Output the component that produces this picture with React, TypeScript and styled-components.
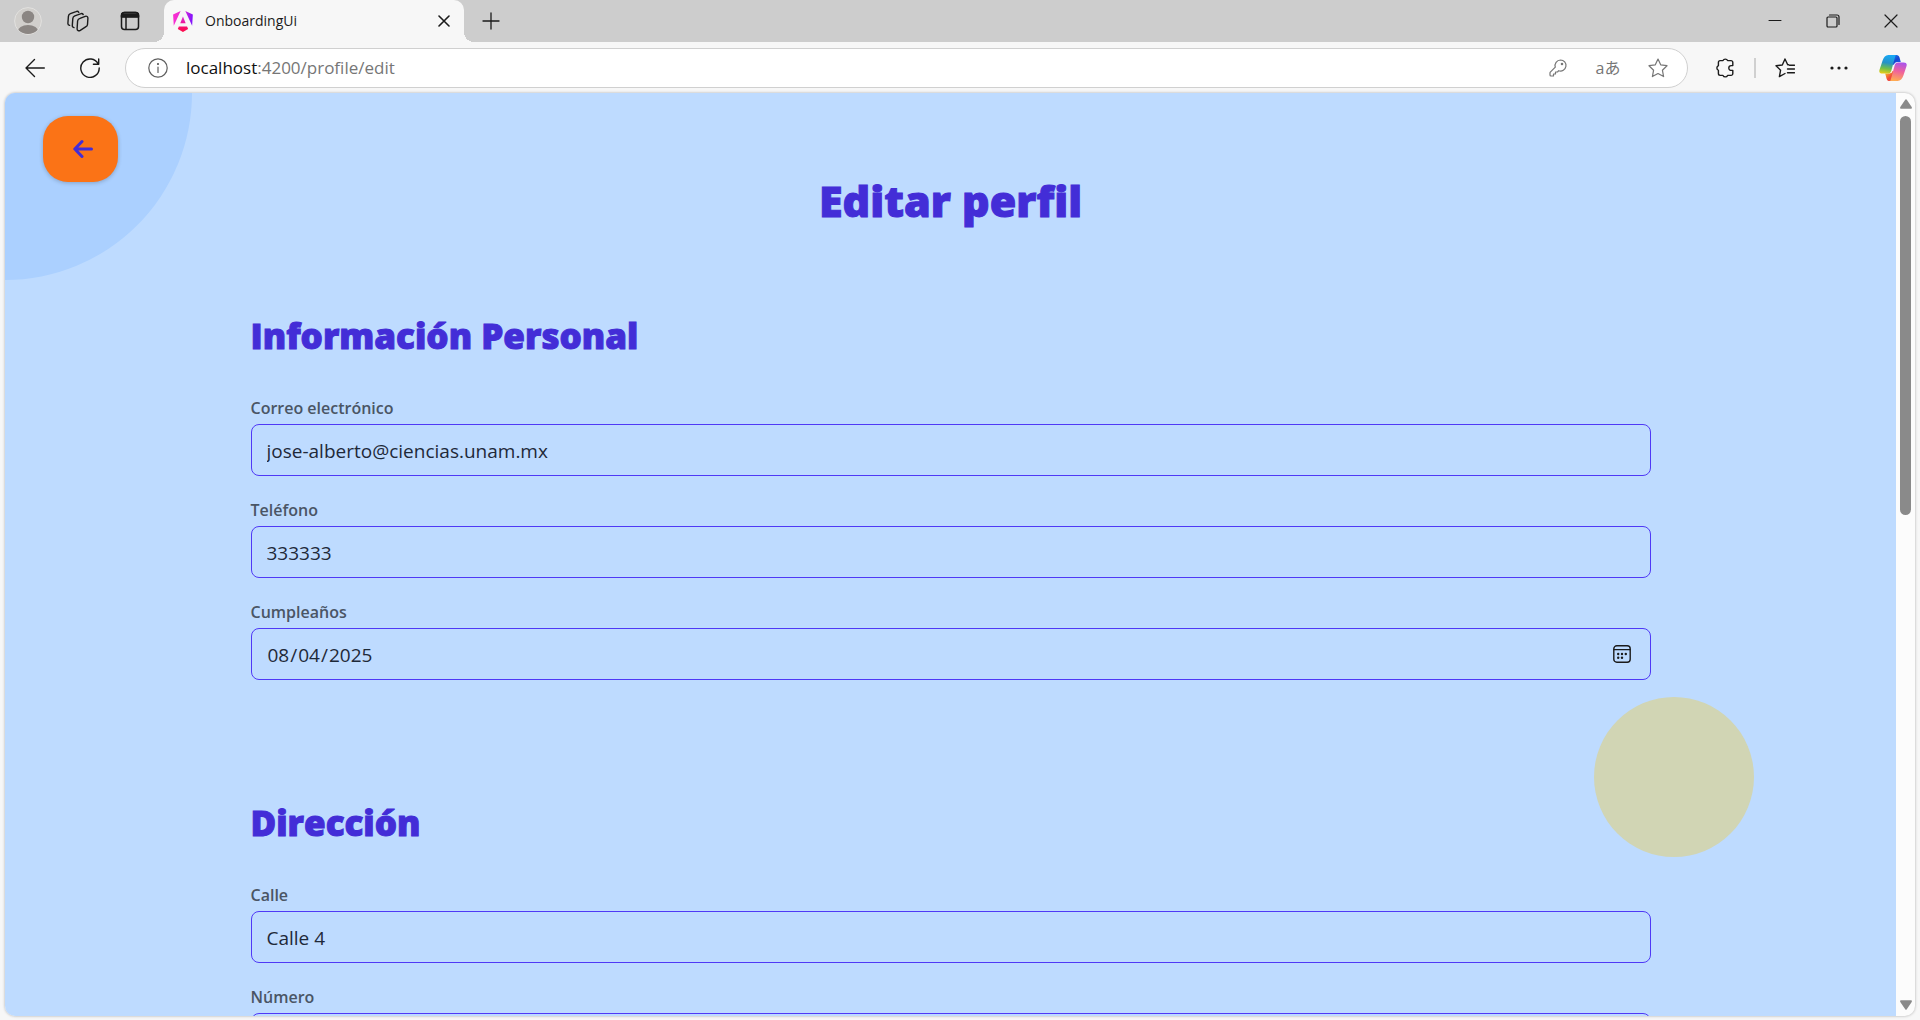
import React, { useRef } from "react";
import styled, { createGlobalStyle } from "styled-components";

const uiFont = `"Segoe UI", "Open Sans", "Noto Sans", sans-serif`;

const GlobalStyle = createGlobalStyle`
  *, *::before, *::after { box-sizing: border-box; }
  body { margin: 0; background: #f7f7f7; font-family: ${uiFont}; }
  button, input { font: inherit; color: inherit; }
`;

const Window = styled.div`
  display: flex;
  flex-direction: column;
  height: 100vh;
  overflow: hidden;
  background: #f7f7f7;
  color: #1b1b1b;
`;

const TabStrip = styled.header`
  display: flex;
  flex: none;
  height: 42px;
  padding-left: 3px;
  background: #cdcdcd;
`;

const IconButton = styled.button<{ $width?: number; $tone?: string }>`
  display: flex;
  flex: none;
  align-items: center;
  justify-content: center;
  width: ${(p) => p.$width ?? 50}px;
  padding: 0;
  border: 0;
  background: none;
  color: ${(p) => p.$tone ?? "#1b1b1b"};

  svg {
    display: block;
  }
`;

const Tab = styled.div`
  position: relative;
  display: flex;
  align-items: center;
  flex: 0 1 300px;
  margin-left: 7px;
  padding: 0 4px 0 9px;
  border-radius: 10px 10px 0 0;
  background: #f7f7f7;

  &::before,
  &::after {
    content: "";
    position: absolute;
    bottom: 0;
    width: 10px;
    height: 10px;
  }
  &::before {
    left: -10px;
    background: radial-gradient(circle at 0 0, transparent 10px, #f7f7f7 10px);
  }
  &::after {
    right: -10px;
    background: radial-gradient(circle at 100% 0, transparent 10px, #f7f7f7 10px);
  }
`;

const TabTitle = styled.span`
  flex: 1;
  margin-left: 12px;
  font-size: 14px;
  line-height: 20px;
`;

const WindowControls = styled.div`
  display: flex;
  margin-left: auto;
`;

const Toolbar = styled.nav`
  display: flex;
  flex: none;
  align-items: center;
  height: 51px;
  padding-left: 7px;
`;

const AddressBar = styled.div`
  display: flex;
  align-items: center;
  flex: 1;
  height: 40px;
  margin: 0 10px 0 8px;
  padding: 0 4px 0 16px;
  border: 1px solid #d0d0d0;
  border-radius: 20px;
  background: #fff;
`;

const Url = styled.div`
  flex: 1;
  margin-left: 12px;
  font-size: 17px;
  line-height: 24px;
  color: #767676;

  b {
    font-weight: 400;
    color: #101010;
  }
`;

const Translate = styled.span`
  font-family: "Open Sans", "Noto Sans CJK JP", sans-serif;
  font-size: 16px;
  line-height: 20px;
`;

const Divider = styled.span`
  width: 2px;
  height: 20px;
  margin: 0 2px;
  background: #d0d0d0;
`;

const Viewport = styled.div`
  display: flex;
  flex: 1;
  min-height: 0;
  margin: 0 5px 4px;
  border-radius: 10px;
  overflow: hidden;
  background: #fcfcfc;
  box-shadow: 0 0 3px rgba(0, 0, 0, 0.3);
`;

const Page = styled.main`
  position: relative;
  flex: 1;
  overflow: hidden;
  padding: 80px 40px 0;
  background: #bedbff;
`;

const CornerBlob = styled.div`
  position: absolute;
  top: 0;
  left: 0;
  width: 187px;
  height: 187px;
  border-radius: 0 0 187px 0;
  background: #abd0ff;
`;

const YellowBlob = styled.div`
  position: absolute;
  top: 604px;
  right: 142px;
  width: 160px;
  height: 160px;
  border-radius: 50%;
  background: #d1d5b4;
`;

const BackButton = styled.button`
  position: absolute;
  top: 23px;
  left: 38px;
  display: flex;
  align-items: center;
  justify-content: center;
  width: 75px;
  height: 66px;
  padding: 0 0 0 4px;
  border: 0;
  border-radius: 25px;
  background: #fb7316;
  color: #432dd7;
  box-shadow: 0 1px 4px rgba(0, 0, 0, 0.22);
`;

const Form = styled.form`
  position: relative;
  max-width: 1400px;
  margin: 0 auto;
`;

const Title = styled.h1`
  margin: 0 0 85px;
  font-size: 43px;
  line-height: 56px;
  font-weight: 800;
  text-align: center;
  color: #432dd7;
  -webkit-text-stroke: 1px #432dd7;
`;

const Section = styled.section`
  display: flex;
  flex-direction: column;
  gap: 21px;
  margin-bottom: 121px;
`;

const SectionTitle = styled.h2`
  margin: 0 0 16px;
  font-size: 35px;
  line-height: 44px;
  font-weight: 800;
  color: #432dd7;
  -webkit-text-stroke: 1px #432dd7;
`;

const FieldRow = styled.div`
  display: flex;
  flex-direction: column;
  gap: 3px;
`;

const Label = styled.label`
  font-size: 16px;
  line-height: 26px;
  font-weight: 600;
  color: #4a5565;
`;

const Box = styled.div`
  display: flex;
  align-items: center;
  height: 52px;
  padding: 0 15px;
  border: 1px solid #4f39f6;
  border-radius: 8px;
`;

const Input = styled.input`
  flex: 1;
  min-width: 0;
  height: 100%;
  padding: 2px 0 0;
  border: 0;
  outline: 0;
  background: none;
  font-size: 19px;
  color: #1e2939;

  &::-webkit-calendar-picker-indicator {
    display: none;
  }
`;

const ScrollTrack = styled.div`
  display: flex;
  flex: none;
  flex-direction: column;
  align-items: center;
  width: 19px;
  padding: 6px 0;
  color: #8a8a8a;
`;

const ScrollLane = styled.div`
  flex: 1;
  width: 11px;
  margin: 7px 0;
`;

const ScrollThumb = styled.div`
  height: calc(100% * 5 / 11);
  border-radius: 6px;
  background: #8a8a8a;
`;

type IconProps = { size?: number; box?: number; width?: number; children: React.ReactNode };

function Icon({ size = 20, box = 20, width = 1.2, children }: IconProps) {
  return (
    <svg
      width={size}
      height={size}
      viewBox={`0 0 ${box} ${box}`}
      fill="none"
      stroke="currentColor"
      strokeWidth={width}
      strokeLinecap="round"
      strokeLinejoin="round"
      aria-hidden="true"
    >
      {children}
    </svg>
  );
}

function Avatar() {
  return (
    <svg width="28" height="28" viewBox="0 0 28 28" aria-hidden="true">
      <defs>
        <clipPath id="avatarClip">
          <circle cx="14" cy="14" r="13" />
        </clipPath>
      </defs>
      <circle cx="14" cy="14" r="13.4" fill="#d1cfcc" stroke="#e2e1df" />
      <g clipPath="url(#avatarClip)" fill="#8b8683">
        <circle cx="14" cy="10" r="6.2" />
        <ellipse cx="14" cy="25" rx="10.5" ry="7" />
      </g>
    </svg>
  );
}

function AngularLogo() {
  return (
    <svg width="20" height="21" viewBox="0 0 223 236" aria-hidden="true">
      <defs>
        <linearGradient id="ngSides" x1="0" y1="60" x2="223" y2="90" gradientUnits="userSpaceOnUse">
          <stop offset="0" stopColor="#fb2fd0" />
          <stop offset="0.5" stopColor="#e32ad6" />
          <stop offset="1" stopColor="#7a12ff" />
        </linearGradient>
        <linearGradient id="ngBase" x1="0" y1="60" x2="0" y2="236" gradientUnits="userSpaceOnUse">
          <stop offset="0" stopColor="#d92be0" />
          <stop offset="0.6" stopColor="#f4127a" />
          <stop offset="1" stopColor="#ff0a45" />
        </linearGradient>
      </defs>
      <path
        fill="url(#ngSides)"
        d="m222.077 39.192-8.019 125.923L137.387 0l84.69 39.192ZM7.937 165.115 0 39.192 84.69 0 7.937 165.115Z"
      />
      <path
        fill="url(#ngBase)"
        d="m168.972 202.017-57.933 33.056-57.934-33.056 11.783-28.556h92.301l11.783 28.556ZM111.039 62.675l30.357 73.803H80.681l30.358-73.803Z"
      />
    </svg>
  );
}

function CopilotLogo() {
  return (
    <svg width="28" height="26" viewBox="0 0 28 26" aria-hidden="true">
      <defs>
        <linearGradient id="cpLeft" x1="8" y1="0" x2="5" y2="19" gradientUnits="userSpaceOnUse">
          <stop offset="0" stopColor="#18a8f5" />
          <stop offset="0.4" stopColor="#2592c8" />
          <stop offset="0.7" stopColor="#6fbf4a" />
          <stop offset="1" stopColor="#f3cf12" />
        </linearGradient>
        <linearGradient id="cpTop" x1="12" y1="0" x2="20" y2="9" gradientUnits="userSpaceOnUse">
          <stop offset="0" stopColor="#1b8df0" />
          <stop offset="0.6" stopColor="#1747d2" />
          <stop offset="1" stopColor="#1f5fe6" />
        </linearGradient>
        <linearGradient id="cpRight" x1="22" y1="7" x2="18" y2="26" gradientUnits="userSpaceOnUse">
          <stop offset="0" stopColor="#a552f0" />
          <stop offset="0.5" stopColor="#f0629c" />
          <stop offset="1" stopColor="#ffac52" />
        </linearGradient>
        <linearGradient id="cpBottom" x1="8" y1="18" x2="15" y2="26" gradientUnits="userSpaceOnUse">
          <stop offset="0" stopColor="#f7a32a" />
          <stop offset="0.5" stopColor="#f0493a" />
          <stop offset="1" stopColor="#ee5a52" />
        </linearGradient>
      </defs>
      <path fill="url(#cpTop)" d="M9 0h8.4c1.8 0 2.6 1 3.1 2.6L21.8 7h-3.3c-2 0-3 1-3.6 3L9 8Z" />
      <path fill="url(#cpBottom)" d="M19 26h-8.4c-1.8 0-2.6-1-3.1-2.6L6.2 18.500h3.300c2 0 3-.6 3.600-2.600L19 18Z" />
      <path
        fill="url(#cpLeft)"
        d="M17 0H9.400C6.500 0 4.800 2.200 3.600 5.500L.6 14.500C-.4 17.200.9 18.600 3.400 18.600h5.300c2 0 3-.8 3.600-2.900l3.500-12.600C16.200 1.300 16.400.4 17 0Z"
      />
      <path
        fill="url(#cpRight)"
        d="M11 26h7.600c2.900 0 4.600-2.200 5.800-5.500l3-9C28.400 8.800 27.100 7.400 24.600 7.400h-5.300c-2 0-3 .8-3.600 2.900L12.200 22.900C11.800 24.700 11.600 25.600 11 26Z"
      />
      <path fill="#f7f7f7" d="m15.400 8.600-2.600 9.200h-1.300c1-.4 1.300-1.300 1.700-2.700l1.500-5.300Z" />
    </svg>
  );
}

type FieldProps = { id: string; label: string; value?: string; type?: string };

function Field({ id, label, value = "", type = "text" }: FieldProps) {
  const input = useRef<HTMLInputElement>(null);
  return (
    <FieldRow>
      <Label htmlFor={id}>{label}</Label>
      <Box>
        <Input ref={input} id={id} type={type} defaultValue={value} />
        {type === "date" && (
          <IconButton
            type="button"
            $width={26}
            aria-label="Abrir calendario"
            onClick={() => input.current?.showPicker()}
          >
            <Icon size={18} box={18} width={1.4}>
              <rect x="0.8" y="0.8" width="16.400" height="16.400" rx="3" />
              <path d="M1 4.600h16" />
              <g fill="currentColor" stroke="none">
                <circle cx="5.200" cy="9" r="1.200" />
                <circle cx="9" cy="9" r="1.200" />
                <circle cx="12.800" cy="9" r="1.200" />
                <circle cx="5.200" cy="12.800" r="1.200" />
                <circle cx="9" cy="12.800" r="1.200" />
              </g>
            </Icon>
          </IconButton>
        )}
      </Box>
    </FieldRow>
  );
}

export default function App() {
  return (
    <Window>
      <GlobalStyle />
      <TabStrip>
        <IconButton aria-label="Perfil">
          <Avatar />
        </IconButton>
        <IconButton aria-label="Áreas de trabajo">
          <Icon size={22} box={22} width={1.4}>
            <path d="M13 8.300 18.200 6.300c1.500-.5 2.800.3 2.700 1.900l-.4 6.300c-.1 1-.6 1.800-1.500 2.200l-5.700 3.600c-1.600.9-3.300.2-3.200-1.600l.5-7.700c.1-1.300.9-2.200 2.400-2.700Z" />
            <path d="M7 17.600c-1.200-.2-1.800-1-1.700-2.200L5.800 8.600c.1-1.300.8-2.200 2-2.700l5.600-2.100c1.200-.5 2.200-.2 2.800.7" />
            <path d="M2.600 15.400c-1.200-.2-1.800-1-1.700-2.200L1.400 6.400c.1-1.300.8-2.200 2-2.700L9 1.600c1.200-.5 2.200-.2 2.800.7" />
          </Icon>
        </IconButton>
        <IconButton $width={54} aria-label="Menú de pestañas">
          <Icon size={20} box={20} width={1.500}>
            <rect x="1.500" y="1.500" width="17" height="17" rx="3" />
            <path d="M1.500 6V4.500a3 3 0 0 1 3-3h11a3 3 0 0 1 3 3V6ZM6 6v12" />
            <path d="M2.500 3.500h15M2.500 5h15" strokeWidth="2.500" />
          </Icon>
        </IconButton>
        <Tab>
          <AngularLogo />
          <TabTitle>OnboardingUi</TabTitle>
          <IconButton $width={32} aria-label="Cerrar pestaña">
            <Icon size={12} box={12} width={1.600}>
              <path d="m1 1 10 10M11 1 1 11" />
            </Icon>
          </IconButton>
        </Tab>
        <IconButton $width={54} aria-label="Nueva pestaña">
          <Icon size={18} box={18} width={1.300}>
            <path d="M9 1v16M1 9h16" />
          </Icon>
        </IconButton>
        <WindowControls>
          <IconButton $width={58} aria-label="Minimizar">
            <Icon size={14} box={14} width={1}>
              <path d="M1 6.500h12" />
            </Icon>
          </IconButton>
          <IconButton $width={58} aria-label="Restaurar">
            <Icon size={14} box={14} width={1.200}>
              <rect x="1" y="3" width="10" height="10" rx="1" />
              <path d="M3.500 1H11a2 2 0 0 1 2 2v7.500" />
            </Icon>
          </IconButton>
          <IconButton $width={58} aria-label="Cerrar">
            <Icon size={14} box={14} width={1.200}>
              <path d="m1 1 12 12M13 1 1 13" />
            </Icon>
          </IconButton>
        </WindowControls>
      </TabStrip>

      <Toolbar>
        <IconButton $width={55} aria-label="Atrás">
          <Icon width={1.400}>
            <path d="M19.300 10H1M9.500 1.500 1 10l8.500 8.500" />
          </Icon>
        </IconButton>
        <IconButton $width={55} aria-label="Actualizar">
          <Icon width={1.400}>
            <path d="M18.200 6A9.200 9.200 0 1 0 19.200 10M18.700 1v5.300h-5.300" />
          </Icon>
        </IconButton>
        <AddressBar>
          <IconButton $width={32} $tone="#5f5f5f" aria-label="Información del sitio">
            <Icon width={1.200}>
              <circle cx="10" cy="10" r="9.200" />
              <path d="M10 9v5.500" />
              <circle cx="10" cy="6" r="0.500" fill="currentColor" />
            </Icon>
          </IconButton>
          <Url>
            <b>localhost</b>:4200/profile/edit
          </Url>
          <IconButton $tone="#767676" aria-label="Contraseñas">
            <Icon size={18} box={18}>
              <path d="M11.500 1a5.500 5.500 0 0 0-5.200 7.200L1.300 13.200a1 1 0 0 0-.3.700V16a1 1 0 0 0 1 1h2.500v-2h2v-2h2l1.200-1.300A5.500 5.500 0 1 0 11.500 1Z" />
              <circle cx="13" cy="5" r="0.700" fill="currentColor" />
            </Icon>
          </IconButton>
          <IconButton $tone="#767676" aria-label="Traducir">
            <Translate>aあ</Translate>
          </IconButton>
          <IconButton $tone="#767676" aria-label="Agregar a favoritos">
            <Icon>
              <path d="m10 1 2.700 5.800 6.300.9-4.600 4.500 1.200 6.400L10 15.500l-5.600 3.100 1.200-6.400L1 7.700l6.300-.9Z" />
            </Icon>
          </IconButton>
        </AddressBar>
        <IconButton $width={54} aria-label="Extensiones">
          <Icon width={1.400}>
            <path d="M8 2.600a2.500 2.500 0 0 1 4.600 0h3.400a1.800 1.800 0 0 1 1.800 1.800v3.200h-1.600a2.400 2.400 0 0 0 0 4.800h1.600v3.200a1.800 1.800 0 0 1-1.800 1.800h-3.400a2.500 2.500 0 0 1-4.600 0H5.200a1.800 1.800 0 0 1-1.800-1.800v-3.300a2.500 2.500 0 0 1 0-4.600V4.400a1.800 1.800 0 0 1 1.800-1.800Z" />
          </Icon>
        </IconButton>
        <Divider />
        <IconButton $width={54} aria-label="Favoritos">
          <Icon width={1.400}>
            <path d="M13.600 6.800h-.9L10 1 7.300 7 1 7.700l4.600 4.500-1.200 6.400 5.600-3.100M12.500 11h7M12.500 14.800h7M14.500 7.200h5" />
          </Icon>
        </IconButton>
        <IconButton $width={54} aria-label="Configuración y más">
          <Icon size={18} box={18}>
            <g fill="currentColor" stroke="none">
              <circle cx="2" cy="9" r="1.600" />
              <circle cx="9" cy="9" r="1.600" />
              <circle cx="16" cy="9" r="1.600" />
            </g>
          </Icon>
        </IconButton>
        <IconButton $width={54} aria-label="Copilot">
          <CopilotLogo />
        </IconButton>
      </Toolbar>

      <Viewport>
        <Page>
          <CornerBlob />
          <YellowBlob />
          <Form onSubmit={(e) => e.preventDefault()}>
            <Title>Editar perfil</Title>
            <Section>
              <SectionTitle>Información Personal</SectionTitle>
              <Field id="correo" label="Correo electrónico" type="email" value="jose-alberto@ciencias.unam.mx" />
              <Field id="telefono" label="Teléfono" type="tel" value="333333" />
              <Field id="cumple" label="Cumpleaños" type="date" value="2025-08-04" />
            </Section>
            <Section>
              <SectionTitle>Dirección</SectionTitle>
              <Field id="calle" label="Calle" value="Calle 4" />
              <Field id="numero" label="Número" />
            </Section>
          </Form>
          <BackButton type="button" aria-label="Volver">
            <Icon size={20} box={20} width={3}>
              <path d="M18.500 10H2M9 2.500 1.800 10 9 17.500" />
            </Icon>
          </BackButton>
        </Page>
        <ScrollTrack aria-hidden="true">
          <svg width="12" height="10" viewBox="0 0 12 10">
            <path fill="currentColor" d="M5.200.8.300 8c-.5.900-.1 1.700.9 1.700h9.600c1 0 1.400-.8.900-1.700L6.800.8c-.4-.7-1.200-.7-1.600 0Z" />
          </svg>
          <ScrollLane>
            <ScrollThumb />
          </ScrollLane>
          <svg width="12" height="10" viewBox="0 0 12 10">
            <path fill="currentColor" d="M5.200 9.200.300 2C-.2 1.100.2.300 1.200.300h9.600c1 0 1.400.8.900 1.700L6.800 9.200c-.4.700-1.200.7-1.600 0Z" />
          </svg>
        </ScrollTrack>
      </Viewport>
    </Window>
  );
}
